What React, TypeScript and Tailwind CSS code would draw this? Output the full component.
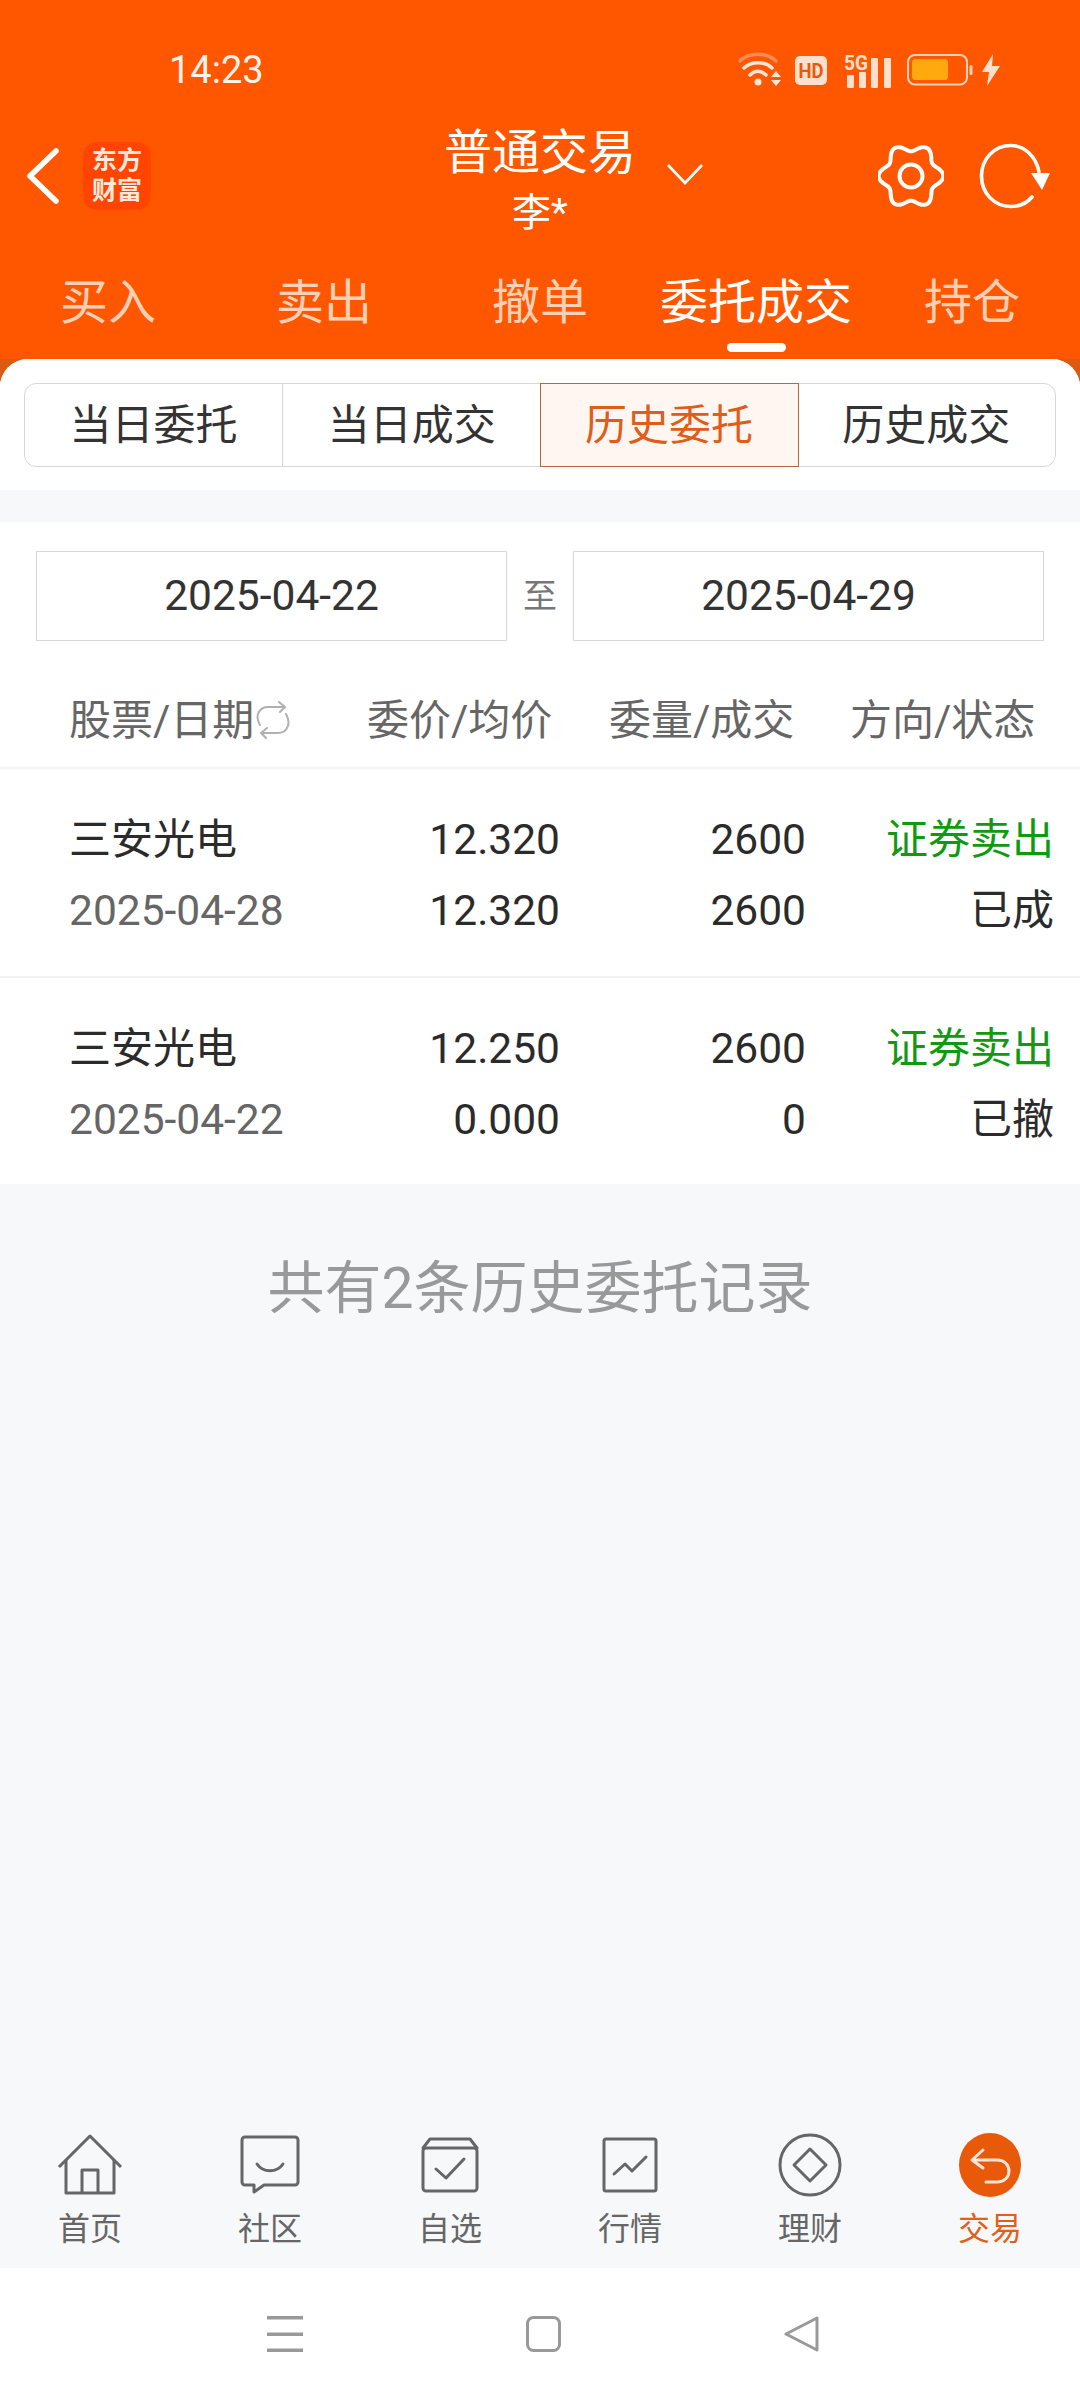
// App.tsx
import React from "react";

const FONT = "font-['Roboto','Noto_Sans_CJK_SC',sans-serif]";

const topTabs = ["买入", "卖出", "撤单", "委托成交", "持仓"];
const subTabs = ["当日委托", "当日成交", "历史委托", "历史成交"];

const orders = [
  { name: "三安光电", date: "2025-04-28", price: "12.320", avg: "12.320", qty: "2600", done: "2600", side: "证券卖出", status: "已成" },
  { name: "三安光电", date: "2025-04-22", price: "12.250", avg: "0.000", qty: "2600", done: "0", side: "证券卖出", status: "已撤" },
];

const WifiIcon = () => (
  <svg width="44" height="36" viewBox="0 0 44 36" fill="none" strokeLinecap="round">
    <path d="M2 9C11 0 29 0 38 9" stroke="#ff8a55" strokeWidth="3.5" />
    <path d="M6 16C13 9 27 9 34 16" stroke="#ffe6d8" strokeWidth="3.5" />
    <path d="M12 23C17 18 23 18 28 23" stroke="#ffe6d8" strokeWidth="3.5" />
    <circle cx="20" cy="30" r="3.5" fill="#ffe6d8" />
    <path d="M33 25L38 19L43 25Z M33 28L43 28L38 34Z" fill="#ffe6d8" />
  </svg>
);

const HdIcon = () => (
  <svg width="32" height="29" viewBox="0 0 32 29">
    <rect width="32" height="29" rx="5" fill="#ffe0cf" />
    <text x="16" y="22" textAnchor="middle" textLength="25" lengthAdjust="spacingAndGlyphs" fontSize="21" fontWeight="700" fontFamily="Roboto" fill="#e8590a">HD</text>
  </svg>
);

const SignalIcon = () => (
  <svg width="47" height="36" viewBox="0 0 47 36" fill="#ffe0cf">
    <text x="0" y="18" textLength="24" lengthAdjust="spacingAndGlyphs" fontSize="21" fontWeight="700" fontFamily="Roboto">5G</text>
    <rect x="3" y="23" width="7" height="13" rx="1" />
    <rect x="15" y="20" width="7" height="16" rx="1" />
    <rect x="27" y="6" width="7" height="30" rx="1" />
    <rect x="40" y="6" width="7" height="30" rx="1" />
  </svg>
);

const BatteryIcon = () => (
  <svg width="66" height="32" viewBox="0 0 66 32" fill="none">
    <rect x="1" y="1" width="59" height="29.500" rx="7" stroke="#ffd2b8" strokeWidth="2" />
    <rect x="5" y="5" width="36" height="21" rx="3.500" fill="#ffa90f" />
    <rect x="62.500" y="11" width="3" height="10" rx="1.500" fill="#ffd2b8" />
  </svg>
);

const BoltIcon = () => (
  <svg width="20" height="32" viewBox="0 0 20 32" fill="#ffe0cf">
    <path d="M12 0L1 18H8L6 32L19 12H11L12 0Z" />
  </svg>
);

const BackIcon = () => (
  <svg width="34" height="56" viewBox="0 0 34 56" fill="none" stroke="#fff" strokeWidth="5.500" strokeLinecap="round" strokeLinejoin="round">
    <path d="M30 3L4 28L30 53" />
  </svg>
);

const ChevronIcon = () => (
  <svg width="36" height="22" viewBox="0 0 36 22" fill="none" stroke="#fff" strokeWidth="2.600">
    <path d="M1 2L18 20L35 2" />
  </svg>
);

// wavy six lobed outline of the gear
const gearPoints = Array.from({ length: 120 }, (_, i) => {
  const a = (i / 120) * Math.PI * 2;
  const r = 28.5 + 3.8 * Math.cos(6 * a);
  return `${(33 + r * Math.cos(a)).toFixed(2)},${(33 + r * Math.sin(a)).toFixed(2)}`;
}).join(" ");

const GearIcon = () => (
  <svg width="66" height="66" viewBox="0 0 66 66" fill="none" stroke="#fff" strokeWidth="4" strokeLinejoin="round">
    <polygon points={gearPoints} />
    <circle cx="33" cy="33" r="11.500" />
  </svg>
);

const RefreshIcon = () => (
  <svg width="72" height="66" viewBox="0 0 72 66" fill="none">
    <path d="M60 29C57 13 45 2.500 32 2.500C15 2.500 2.500 16 2.500 33C2.500 50 15 63.500 32 63.500C41 63.500 48 60 53 54" stroke="#fff" strokeWidth="3.600" strokeLinecap="round" />
    <path d="M52 30H71L63 47Z" fill="#fff" />
  </svg>
);

const SwapIcon = () => (
  <svg width="38" height="38" viewBox="0 0 38 38" fill="none" stroke="#b0b0b0" strokeWidth="2" strokeLinecap="round">
    <path d="M6 24C0 14 6 6 14 6H31M25 1L31 6L26 11" />
    <path d="M32 13C38 24 32 32 24 32H7M13 27L7 32L12 37" />
  </svg>
);

const HomeIcon = () => (
  <svg width="66" height="62" viewBox="0 0 66 62" fill="none" stroke="#666" strokeWidth="3" strokeLinejoin="round">
    <path d="M2 33L33 2L64 33" />
    <path d="M9 26V59H57V26" />
    <path d="M25 59V36H41V59" />
  </svg>
);

const CommunityIcon = () => (
  <svg width="60" height="60" viewBox="0 0 60 60" fill="none" stroke="#666" strokeWidth="3" strokeLinejoin="round" strokeLinecap="round">
    <path d="M5 2H55A3 3 0 0 1 58 5V47A3 3 0 0 1 55 50H24L14 57V50H5A3 3 0 0 1 2 47V5A3 3 0 0 1 5 2Z" />
    <path d="M17 29C23 38 37 38 43 29" />
  </svg>
);

const WatchIcon = () => (
  <svg width="58" height="56" viewBox="0 0 58 56" fill="none" stroke="#666" strokeWidth="3" strokeLinejoin="round" strokeLinecap="round">
    <rect x="2" y="11" width="54" height="43" rx="3" />
    <path d="M2 11L9 2H49L56 11" />
    <path d="M15 32L25 41L43 22" />
  </svg>
);

const MarketIcon = () => (
  <svg width="56" height="56" viewBox="0 0 56 56" fill="none" stroke="#666" strokeWidth="3" strokeLinejoin="round" strokeLinecap="round">
    <rect x="2" y="2" width="52" height="52" rx="2" />
    <path d="M12 37L23 27L30 34L44 20" />
  </svg>
);

const WealthIcon = () => (
  <svg width="64" height="64" viewBox="0 0 64 64" fill="none" stroke="#666" strokeWidth="3" strokeLinejoin="round">
    <circle cx="32" cy="32" r="30" />
    <path d="M32 16L48 32L32 48L16 32Z" />
  </svg>
);

const TradeIcon = () => (
  <svg width="62" height="64" viewBox="0 0 62 64" fill="none">
    <ellipse cx="31" cy="32" rx="31" ry="32" fill="#e8590a" />
    <path d="M24 17L13 27L24 35M13 27H38C54 27 54 49 38 49H27" stroke="#ffe6d8" strokeWidth="3" strokeLinecap="round" strokeLinejoin="round" />
  </svg>
);

const navItems = [
  { label: "首页", icon: <HomeIcon /> },
  { label: "社区", icon: <CommunityIcon /> },
  { label: "自选", icon: <WatchIcon /> },
  { label: "行情", icon: <MarketIcon /> },
  { label: "理财", icon: <WealthIcon /> },
  { label: "交易", icon: <TradeIcon />, active: true },
];

const App: React.FC = () => {
  return (
    <div className={`flex h-[2400px] w-[1080px] flex-col overflow-hidden bg-[#dc5a12] ${FONT}`}>
      <header className="h-[359px] shrink-0 bg-[#ff5700]">
        {/* status bar */}
        <div className="flex h-[110px] items-center pl-[169px] pr-[79px] pt-[30px]">
          <span className="text-[38px] leading-[44px] text-[#fff3ec]">14:23</span>
          <div className="ml-auto flex items-center">
            <WifiIcon />
            <span className="ml-[13px]"><HdIcon /></span>
            <span className="ml-[17px]"><SignalIcon /></span>
            <span className="ml-[16px]"><BatteryIcon /></span>
            <span className="ml-[8px]"><BoltIcon /></span>
          </div>
        </div>

        {/* title row */}
        <div className="grid h-[132px] grid-cols-[360px_360px_360px] items-center">
          <div className="flex items-center pl-[26px]">
            <BackIcon />
            <div className="ml-[23px] flex h-[68px] w-[68px] flex-col items-center justify-center rounded-[14px] bg-[#ff4500] text-[25px] font-bold leading-[30px] text-[#ffe9dd]">
              <span>东方</span>
              <span>财富</span>
            </div>
          </div>
          <div className="flex items-center pl-[84px] pt-[6px]">
            <div className="flex w-[192px] flex-col items-center text-white">
              <span className="text-[48px] leading-[60px]">普通交易</span>
              <span className="mt-[8px] text-[39px] leading-[44px]">李*</span>
            </div>
            <span className="ml-[31px] mt-[-10px]"><ChevronIcon /></span>
          </div>
          <div className="flex items-center justify-end pr-[29px]">
            <GearIcon />
            <span className="ml-[35px]"><RefreshIcon /></span>
          </div>
        </div>

        {/* trade tabs */}
        <div className="flex h-[117px]">
          {topTabs.map((tab) => {
            const isActive = tab === "委托成交";
            return (
              <div key={tab} className="flex flex-1 flex-col items-center pt-[31px]">
                <span className={`text-[48px] leading-[60px] ${isActive ? "text-white" : "text-[#ffd0b6]"}`}>{tab}</span>
                {isActive && <span className="mt-[10px] h-[9px] w-[59px] rounded-full bg-white" />}
              </div>
            );
          })}
        </div>
      </header>

      <main className="flex min-h-0 flex-1 flex-col rounded-t-[28px] bg-[#f7f8fa]">
        {/* sub tabs */}
        <div className="h-[131px] shrink-0 rounded-t-[28px] bg-white px-[24px] pt-[24px]">
          <div className="flex h-[84px] rounded-[12px] border border-[#d8d8d8]">
            {subTabs.map((tab, i) => {
              const isActive = tab === "历史委托";
              return (
                <div
                  key={tab}
                  className={`flex flex-1 items-center justify-center text-[42px] ${
                    isActive
                      ? "m-[-1px] border border-[#b9683a] bg-[#fff6f2] text-[#e05d17]"
                      : "text-[#333]"
                  } ${i === 1 ? "border-l border-[#d8d8d8]" : ""}`}
                >
                  {tab}
                </div>
              );
            })}
          </div>
        </div>

        {/* list */}
        <div className="mt-[32px] shrink-0 bg-white">
          <div className="flex items-center px-[36px] pt-[29px]">
            <div className="flex h-[90px] w-[471px] items-center justify-center border border-[#d8d8d8] text-[42.5px] text-[#333]">2025-04-22</div>
            <div className="flex flex-1 items-center justify-center text-[34px] text-[#777]">至</div>
            <div className="flex h-[90px] w-[471px] items-center justify-center border border-[#d8d8d8] text-[42.5px] text-[#333]">2025-04-29</div>
          </div>
          <div className="grid h-[128px] grid-cols-[298px_242px_241px_auto] items-center border-b-2 border-[#f3f3f3] pl-[69px] pt-[32px] text-[42px] text-[#666]">
            <span className="flex items-center">股票/日期<SwapIcon /></span>
            <span>委价/均价</span>
            <span>委量/成交</span>
            <span>方向/状态</span>
          </div>
          {orders.map((order, i) => (
            <div
              key={order.date}
              className={`grid grid-cols-[231px_260px_246px_248px] pl-[69px] pt-[35px] text-[42.5px] leading-[71px] text-[#2b2b2b] ${
                i === 0 ? "border-b-2 border-[#f3f3f3] pb-[30px]" : "pb-[29px]"
              }`}
            >
              <span className="text-[42px]">{order.name}</span>
              <span className="text-right">{order.price}</span>
              <span className="text-right">{order.qty}</span>
              <span className="text-right text-[42px] text-[#0f9a12]">{order.side}</span>
              <span className="whitespace-nowrap text-[#666]">{order.date}</span>
              <span className="text-right">{order.avg}</span>
              <span className="text-right">{order.done}</span>
              <span className="text-right text-[42px]">{order.status}</span>
            </div>
          ))}
        </div>

        <p className="pt-[65px] text-center text-[57px] leading-[80px] text-[#999]">共有2条历史委托记录</p>

        {/* bottom nav */}
        <nav className="mt-auto flex h-[143px] shrink-0">
          {navItems.map((item) => (
            <div key={item.label} className="flex flex-1 flex-col items-center pt-[8px]">
              <div className="flex h-[64px] items-center justify-center">{item.icon}</div>
              <span className={`mt-[12px] text-[32px] leading-[40px] ${item.active ? "text-[#e0601c]" : "text-[#666]"}`}>{item.label}</span>
            </div>
          ))}
        </nav>
      </main>

      {/* system nav */}
      <div className="flex h-[132px] shrink-0 items-center justify-center gap-[223px] bg-white pl-[6px]">
        <svg width="36" height="36" viewBox="0 0 36 36" fill="#999">
          <rect x="0" y="0" width="36" height="3.500" />
          <rect x="0" y="16.500" width="36" height="3.500" />
          <rect x="0" y="32.500" width="36" height="3.500" />
        </svg>
        <svg width="35" height="36" viewBox="0 0 35 36" fill="none" stroke="#999" strokeWidth="3">
          <rect x="1.500" y="1.500" width="32" height="33" rx="6" />
        </svg>
        <svg width="35" height="36" viewBox="0 0 35 36" fill="none" stroke="#999" strokeWidth="3" strokeLinejoin="round">
          <path d="M33 2V34L2 18Z" />
        </svg>
      </div>
    </div>
  );
};

export default App;
